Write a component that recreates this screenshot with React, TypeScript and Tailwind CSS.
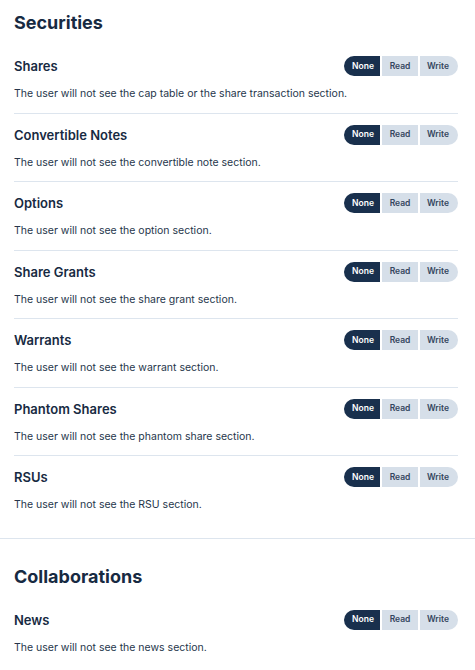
import React, { useState } from 'react';

type Level = 'None' | 'Read' | 'Write';

interface Permission {
  title: string;
  desc: string;
}

const securities: Permission[] = [
  { title: 'Shares', desc: 'The user will not see the cap table or the share transaction section.' },
  { title: 'Convertible Notes', desc: 'The user will not see the convertible note section.' },
  { title: 'Options', desc: 'The user will not see the option section.' },
  { title: 'Share Grants', desc: 'The user will not see the share grant section.' },
  { title: 'Warrants', desc: 'The user will not see the warrant section.' },
  { title: 'Phantom Shares', desc: 'The user will not see the phantom share section.' },
  { title: 'RSUs', desc: 'The user will not see the RSU section.' },
];

const collaborations: Permission[] = [
  { title: 'News', desc: 'The user will not see the news section.' },
];

const LevelToggle: React.FC = () => {
  const [level, setLevel] = useState<Level>('None');
  const levels: Level[] = ['None', 'Read', 'Write'];

  return (
    <div className="flex gap-[2px]">
      {levels.map((l, i) => (
        <button
          key={l}
          onClick={() => setLevel(l)}
          className={`h-[20px] text-[8.5px] font-semibold flex items-center justify-center ${
            i === 0 ? 'w-[36px] rounded-l-full pl-[2px]' : i === 1 ? 'w-[36px]' : 'w-[38px] rounded-r-full pr-[2px]'
          } ${level === l ? 'bg-[#19304d] text-white' : 'bg-[#d6dfe9] text-[#34465e]'}`}
        >
          {l}
        </button>
      ))}
    </div>
  );
};

const Section: React.FC<{ title: string; items: Permission[]; first?: boolean }> = ({ title, items, first }) => (
  <section className={first ? 'pt-[9px] pb-[14px]' : 'pt-[24px] pb-[14px] border-t border-[#dde5ee]'}>
    <h2 className="px-[14px] text-[18px] leading-[28px] font-bold text-[#172a42] mb-[8px]">{title}</h2>
    <div className="pl-[14px] pr-[17px]">
      {items.map((item, i) => (
        <div key={item.title} className={`pt-[11px] pb-[11.5px] ${i > 0 ? 'border-t border-[#dde5ee]' : ''}`}>
          <div className="flex items-center justify-between">
            <h3 className="text-[13px] leading-[20px] font-semibold text-[#172a42]">{item.title}</h3>
            <LevelToggle />
          </div>
          <p className="mt-[11px] text-[10.5px] leading-[14px] text-[#26364b]">{item.desc}</p>
        </div>
      ))}
    </div>
  </section>
);

export default function App() {
  return (
    <div className="w-[475px] min-h-[670px] bg-white" style={{ fontFamily: 'Inter, "Noto Sans", sans-serif' }}>
      <Section title="Securities" items={securities} first />
      <Section title="Collaborations" items={collaborations} />
    </div>
  );
}
